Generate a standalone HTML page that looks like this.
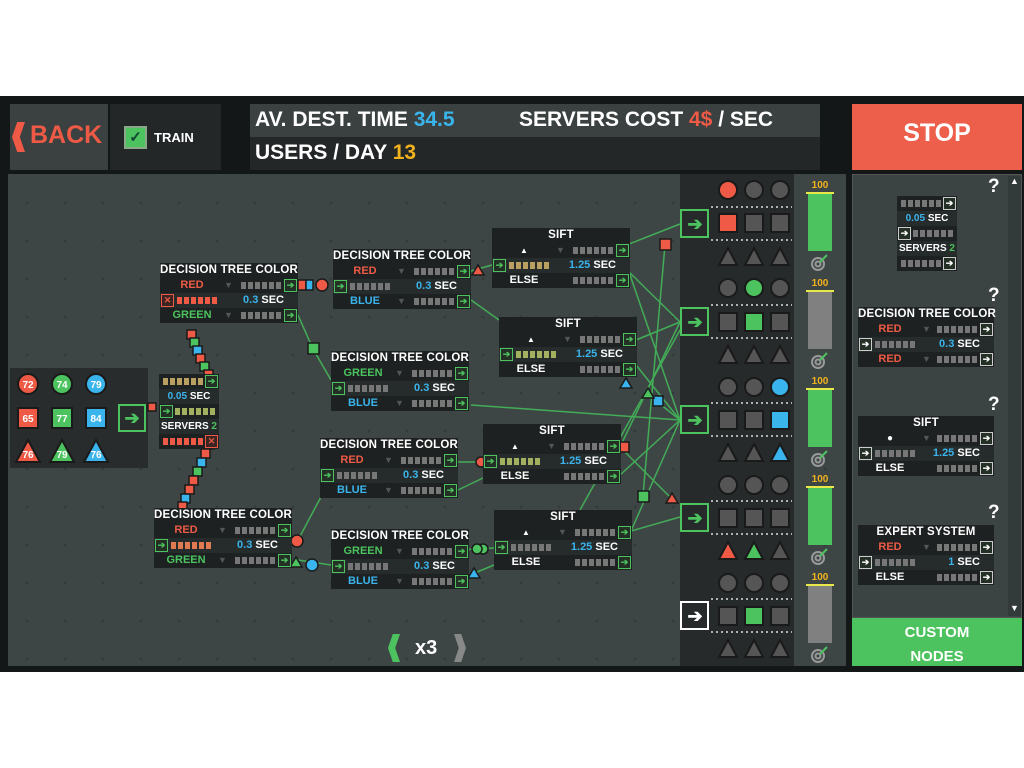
<!DOCTYPE html><html><head><meta charset="utf-8"><style>
*{margin:0;padding:0;box-sizing:border-box}
body{width:1024px;height:768px;background:#fff;position:relative;overflow:hidden;font-family:"Liberation Sans",sans-serif;font-weight:bold}
.abs{position:absolute}
.n{position:absolute;background:#1d2121;color:#fff;font-size:11px}
.n>div{height:15px;position:relative;line-height:15px;white-space:nowrap}
.n .t{text-align:center;font-size:11.5px;letter-spacing:.2px}
.L{position:absolute;left:0;width:64px;text-align:center}
.v{position:absolute;left:64px;color:#555;font-size:9px}
.d{position:absolute;right:17px;top:4px;height:7px;width:40px;background:repeating-linear-gradient(90deg,#777 0 5px,transparent 5px 7px)}
.dl{position:absolute;left:17px;top:4px;height:7px;width:40px;background:repeating-linear-gradient(90deg,#777 0 5px,transparent 5px 7px)}
.a{position:absolute;right:1px;top:1px;width:13px;height:13px;border:1px solid #4cc35e;color:#4cc35e;font-size:9px;line-height:11px;text-align:center;background:#243026}
.al{left:1px;right:auto}
.s{position:absolute;right:14px}
.b{color:#3ab4ec}.r{color:#ee5a45}.g{color:#4cc35e}.y{color:#f2b21d}
.R{background:#262b2b}
</style></head><body>
<div class="abs" style="left:0;top:96px;width:1024px;height:576px;background:#141717"></div>
<!-- top bar -->
<div class="abs" style="left:10px;top:104px;width:98px;height:66px;background:#3a4140"></div>
<div class="abs" style="left:12px;top:122px;width:13px;height:30px;background:#ee5a45;clip-path:polygon(40% 0,100% 0,60% 50%,100% 100%,40% 100%,0 50%)"></div>
<div class="abs" style="left:30px;top:121px;color:#ee5a45;font-size:25px;letter-spacing:0">BACK</div>
<div class="abs" style="left:110px;top:104px;width:111px;height:66px;background:#232727"></div>
<div class="abs" style="left:124px;top:126px;width:23px;height:23px;background:#4cc35e;border:2px solid #8a8;color:#143;font-size:15px;text-align:center;line-height:19px">✓</div>
<div class="abs" style="left:154px;top:130px;color:#fff;font-size:13px">TRAIN</div>
<div class="abs" style="left:250px;top:104px;width:570px;height:33px;background:#3a4140"></div>
<div class="abs" style="left:250px;top:137px;width:570px;height:33px;background:#232727"></div>
<div class="abs" style="left:255px;top:108px;color:#fff;font-size:21px">AV. DEST. TIME <span class="b">34.5</span></div>
<div class="abs" style="left:519px;top:108px;color:#fff;font-size:21px">SERVERS COST <span class="r">4$</span> / SEC</div>
<div class="abs" style="left:255px;top:141px;color:#fff;font-size:21px">USERS / DAY <span class="y">13</span></div>
<div class="abs" style="left:852px;top:104px;width:170px;height:66px;background:#ee5f4b"></div>
<div class="abs" style="left:852px;top:119px;width:170px;text-align:center;color:#fff;font-size:25px">STOP</div>
<!-- canvas -->
<div class="abs" style="left:8px;top:174px;width:838px;height:492px;background:#3d4645;background-image:radial-gradient(#333b3a 1.2px,transparent 1.6px);background-size:38px 38px;background-position:0 10px"></div>
<!-- source -->
<div class="abs" style="left:10px;top:368px;width:138px;height:100px;background:#282c2c"></div>
<div class="abs" style="left:118px;top:404px;width:28px;height:28px;border:2px solid #4cc35e;color:#4cc35e;font-size:18px;text-align:center;line-height:24px">➔</div>
<!-- destination panel -->
<div class="abs" style="left:680px;top:174px;width:114px;height:492px;background:#262a2a"></div>
<!-- right panel -->
<div class="abs" style="left:852px;top:174px;width:170px;height:444px;background:#3c4443;border:1px solid #555"></div>
<div class="abs" style="left:1008px;top:176px;width:13px;height:440px;background:#333b3a"></div>
<div class="abs" style="left:1010px;top:176px;color:#fff;font-size:9px">▲</div>
<div class="abs" style="left:1010px;top:603px;color:#fff;font-size:9px">▼</div>
<div class="abs" style="left:852px;top:618px;width:170px;height:48px;background:#4cc35e"></div>
<div class="abs" style="left:852px;top:621px;width:170px;text-align:center;color:#fff;font-size:15px;line-height:24px">CUSTOM<br>NODES</div>
<div class="abs" style="left:988px;top:176px;color:#fff;font-size:19px">?</div>
<div class="abs" style="left:988px;top:285px;color:#fff;font-size:19px">?</div>
<div class="abs" style="left:988px;top:394px;color:#fff;font-size:19px">?</div>
<div class="abs" style="left:988px;top:502px;color:#fff;font-size:19px">?</div>
<div class="abs" style="left:388px;top:634px;width:12px;height:28px;background:#4cc35e;clip-path:polygon(40% 0,100% 0,60% 50%,100% 100%,40% 100%,0 50%)"></div>
<div class="abs" style="left:415px;top:637px;color:#fff;font-size:20px">x3</div>
<div class="abs" style="left:454px;top:634px;width:12px;height:28px;background:#888;clip-path:polygon(0 0,60% 0,100% 50%,60% 100%,0 100%,40% 50%)"></div>

<svg class="abs" style="left:0;top:0" width="1024" height="768">
<g stroke="#44b85a" stroke-width="1.5" fill="none" opacity=".9">
<path d="M298 315 L313 349 L331 380"/><path d="M471 271 L492 265"/><path d="M471 300 L499 320"/>
<path d="M298 540 L330 480"/><path d="M298 560 L331 565"/>
<path d="M458 462 L483 462"/><path d="M458 490 L483 478"/><path d="M458 550 L494 548"/><path d="M458 580 L494 565"/>
<path d="M629 244 L680 224"/><path d="M629 272 L680 322"/><path d="M629 272 L680 420"/>
<path d="M636 340 L680 322"/><path d="M636 365 L680 420"/><path d="M471 405 L680 420"/>
<path d="M620 447 L680 322"/><path d="M620 447 L673 500"/><path d="M620 475 L680 420"/>
<path d="M631 531 L680 517"/><path d="M631 531 L680 420"/><path d="M580 510 L680 330"/>
<path d="M655 400 L680 420"/><path d="M643 495 L665 245"/>
</g>
<g fill="#555" stroke="#1a1a1a" stroke-width="2">
<circle cx="728" cy="190" r="9" fill="#ee5a45"/><circle cx="754" cy="190" r="9"/><circle cx="780" cy="190" r="9"/>
<circle cx="728" cy="288" r="9"/><circle cx="754" cy="288" r="9" fill="#4cc35e"/><circle cx="780" cy="288" r="9"/>
<circle cx="728" cy="387" r="9"/><circle cx="754" cy="387" r="9"/><circle cx="780" cy="387" r="9" fill="#3ab4ec"/>
<circle cx="728" cy="485" r="9"/><circle cx="754" cy="485" r="9"/><circle cx="780" cy="485" r="9"/>
<circle cx="728" cy="583" r="9"/><circle cx="754" cy="583" r="9"/><circle cx="780" cy="583" r="9"/>
<rect x="719" y="214" width="18" height="18" fill="#ee5a45"/><rect x="745" y="214" width="18" height="18"/><rect x="771" y="214" width="18" height="18"/>
<rect x="719" y="313" width="18" height="18"/><rect x="745" y="313" width="18" height="18" fill="#4cc35e"/><rect x="771" y="313" width="18" height="18"/>
<rect x="719" y="411" width="18" height="18"/><rect x="745" y="411" width="18" height="18"/><rect x="771" y="411" width="18" height="18" fill="#3ab4ec"/>
<rect x="719" y="509" width="18" height="18"/><rect x="745" y="509" width="18" height="18"/><rect x="771" y="509" width="18" height="18"/>
<rect x="719" y="607" width="18" height="18"/><rect x="745" y="607" width="18" height="18" fill="#4cc35e"/><rect x="771" y="607" width="18" height="18"/>
<path d="M719 265 L728 248 L737 265Z M745 265 L754 248 L763 265Z M771 265 L780 248 L789 265Z"/>
<path d="M719 363 L728 346 L737 363Z M745 363 L754 346 L763 363Z M771 363 L780 346 L789 363Z"/>
<path d="M719 461 L728 444 L737 461Z M745 461 L754 444 L763 461Z"/><path d="M771 461 L780 444 L789 461Z" fill="#3ab4ec"/>
<path d="M719 559 L728 542 L737 559Z" fill="#ee5a45"/><path d="M745 559 L754 542 L763 559Z" fill="#4cc35e"/><path d="M771 559 L780 542 L789 559Z"/>
<path d="M719 657 L728 640 L737 657Z M745 657 L754 640 L763 657Z M771 657 L780 640 L789 657Z"/>
</g>
<g stroke="#ddd" stroke-width="1.5" stroke-dasharray="2 3">
<path d="M711 207H792M711 240H792M711 305H792M711 338H792M711 403H792M711 436H792M711 501H792M711 534H792M711 599H792M711 632H792"/>
</g>
<g fill="none" stroke="#4cc35e" stroke-width="2">
<rect x="681" y="210" width="27" height="27"/><rect x="681" y="308" width="27" height="27"/><rect x="681" y="406" width="27" height="27"/><rect x="681" y="504" width="27" height="27"/>
</g>
<rect x="681" y="602" width="27" height="27" fill="none" stroke="#fff" stroke-width="2"/>
<g font-family="Liberation Sans" font-weight="bold" font-size="18" text-anchor="middle" fill="#4cc35e">
<text x="695" y="230">➔</text><text x="695" y="328">➔</text><text x="695" y="426">➔</text><text x="695" y="524">➔</text><text x="695" y="622" fill="#fff">➔</text>
</g>
<g font-family="Liberation Sans" font-weight="bold" font-size="10" fill="#f2b21d" text-anchor="middle">
<text x="820" y="188">100</text><text x="820" y="286">100</text><text x="820" y="384">100</text><text x="820" y="482">100</text><text x="820" y="580">100</text>
</g>
<g>
<rect x="808" y="194" width="24" height="57" fill="#4cc35e"/><rect x="808" y="292" width="24" height="57" fill="#808080"/>
<rect x="808" y="390" width="24" height="57" fill="#4cc35e"/><rect x="808" y="488" width="24" height="57" fill="#4cc35e"/>
<rect x="808" y="586" width="24" height="57" fill="#808080"/>
<path d="M806 193H834M806 291H834M806 389H834M806 487H834M806 585H834" stroke="#e8e84a" stroke-width="2"/>
</g>
<g fill="none" stroke="#999" stroke-width="2">
<circle cx="818" cy="264" r="6"/><circle cx="818" cy="362" r="6"/><circle cx="818" cy="460" r="6"/><circle cx="818" cy="558" r="6"/><circle cx="818" cy="656" r="6"/>
<circle cx="818" cy="264" r="2.5"/><circle cx="818" cy="362" r="2.5"/><circle cx="818" cy="460" r="2.5"/><circle cx="818" cy="558" r="2.5"/><circle cx="818" cy="656" r="2.5"/>
</g>
<g stroke="#4cc35e" stroke-width="2"><path d="M820 262L827 255M820 360L827 353M820 458L827 451M820 556L827 549M820 654L827 647"/></g>
<g stroke="#1a1a1a" stroke-width="2" font-family="Liberation Sans" font-weight="bold" font-size="10" fill="#fff" text-anchor="middle">
<circle cx="28" cy="384" r="10" fill="#ee5a45"/><circle cx="62" cy="384" r="10" fill="#4cc35e"/><circle cx="96" cy="384" r="10" fill="#3ab4ec"/>
<rect x="18" y="408" width="20" height="20" fill="#ee5a45"/><rect x="52" y="408" width="20" height="20" fill="#4cc35e"/><rect x="86" y="408" width="20" height="20" fill="#3ab4ec"/>
<path d="M16 462L28 440L40 462Z" fill="#ee5a45"/><path d="M50 462L62 440L74 462Z" fill="#4cc35e"/><path d="M84 462L96 440L108 462Z" fill="#3ab4ec"/>
<g stroke="none"><text x="28" y="388">72</text><text x="62" y="388">74</text><text x="96" y="388">79</text><text x="28" y="422">65</text><text x="62" y="422">77</text><text x="96" y="422">84</text><text x="28" y="458">76</text><text x="62" y="458">79</text><text x="96" y="458">76</text></g>
</g>
<g stroke="#1a1a1a" stroke-width="1.5">
<rect x="298" y="280" width="8" height="10" fill="#ee5a45"/><rect x="306" y="280" width="7" height="10" fill="#3ab4ec"/><circle cx="322" cy="285" r="6" fill="#ee5a45"/>
<rect x="308" y="343" width="11" height="11" fill="#4cc35e"/><path d="M472 275L478 265L484 275Z" fill="#ee5a45"/>
<circle cx="297" cy="541" r="6" fill="#ee5a45"/><rect x="660" y="239" width="11" height="11" fill="#ee5a45"/>
<rect x="653" y="396" width="10" height="10" fill="#3ab4ec"/><path d="M620 388L626 378L632 388Z" fill="#3ab4ec"/><path d="M642 398L648 388L654 398Z" fill="#4cc35e"/>
<rect x="619" y="442" width="10" height="10" fill="#ee5a45"/><rect x="638" y="491" width="11" height="11" fill="#4cc35e"/><path d="M666 503L672 493L678 503Z" fill="#ee5a45"/>
<circle cx="312" cy="565" r="6" fill="#3ab4ec"/><circle cx="483" cy="549" r="5" fill="#4cc35e"/><circle cx="477" cy="549" r="5" fill="#4cc35e"/><path d="M468 578L474 568L480 578Z" fill="#3ab4ec"/>
<circle cx="481" cy="462" r="5" fill="#ee5a45"/><path d="M290 567L296 557L302 567Z" fill="#4cc35e"/>
<g fill="#ee5a45"><rect x="187" y="330" width="9" height="9"/><rect x="190" y="338" width="9" height="9" fill="#4cc35e"/><rect x="193" y="346" width="9" height="9" fill="#3ab4ec"/><rect x="196" y="354" width="9" height="9"/><rect x="200" y="362" width="9" height="9" fill="#4cc35e"/><rect x="204" y="370" width="9" height="9"/>
<rect x="148" y="403" width="8" height="8"/><rect x="205" y="440" width="9" height="9" fill="#4cc35e"/><rect x="201" y="449" width="9" height="9"/><rect x="197" y="458" width="9" height="9" fill="#3ab4ec"/><rect x="193" y="467" width="9" height="9" fill="#4cc35e"/><rect x="189" y="476" width="9" height="9"/><rect x="185" y="485" width="9" height="9"/><rect x="181" y="494" width="9" height="9" fill="#3ab4ec"/><rect x="178" y="502" width="9" height="9"/></g>
</g>
</svg>

<div class="n" style="left:160px;top:263px;width:138px"><div class="t">DECISION TREE COLOR</div>
<div><span class="L r">RED</span><span class="v">▼</span><span class="d"></span><span class="a">➔</span></div>
<div class="R"><span class="a al r" style="border-color:#ee5a45;color:#ee5a45;background:#3a2522">✕</span><span class="dl" style="background:repeating-linear-gradient(90deg,#ee5a45 0 5px,transparent 5px 7px)"></span><span class="s"><span class="b">0.3</span> SEC</span></div>
<div><span class="L g">GREEN</span><span class="v">▼</span><span class="d"></span><span class="a">➔</span></div></div>

<div class="n" style="left:333px;top:249px;width:138px"><div class="t">DECISION TREE COLOR</div>
<div><span class="L r">RED</span><span class="v">▼</span><span class="d"></span><span class="a">➔</span></div>
<div class="R"><span class="a al">➔</span><span class="dl"></span><span class="s"><span class="b">0.3</span> SEC</span></div>
<div><span class="L b">BLUE</span><span class="v">▼</span><span class="d"></span><span class="a">➔</span></div></div>

<div class="n" style="left:331px;top:351px;width:138px"><div class="t">DECISION TREE COLOR</div>
<div><span class="L g">GREEN</span><span class="v">▼</span><span class="d"></span><span class="a">➔</span></div>
<div class="R"><span class="a al">➔</span><span class="dl"></span><span class="s"><span class="b">0.3</span> SEC</span></div>
<div><span class="L b">BLUE</span><span class="v">▼</span><span class="d"></span><span class="a">➔</span></div></div>

<div class="n" style="left:320px;top:438px;width:138px"><div class="t">DECISION TREE COLOR</div>
<div><span class="L r">RED</span><span class="v">▼</span><span class="d"></span><span class="a">➔</span></div>
<div class="R"><span class="a al">➔</span><span class="dl"></span><span class="s"><span class="b">0.3</span> SEC</span></div>
<div><span class="L b">BLUE</span><span class="v">▼</span><span class="d"></span><span class="a">➔</span></div></div>

<div class="n" style="left:154px;top:508px;width:138px"><div class="t">DECISION TREE COLOR</div>
<div><span class="L r">RED</span><span class="v">▼</span><span class="d"></span><span class="a">➔</span></div>
<div class="R"><span class="a al">➔</span><span class="dl" style="background:repeating-linear-gradient(90deg,#e07a50 0 5px,transparent 5px 7px)"></span><span class="s"><span class="b">0.3</span> SEC</span></div>
<div><span class="L g">GREEN</span><span class="v">▼</span><span class="d"></span><span class="a">➔</span></div></div>

<div class="n" style="left:331px;top:529px;width:138px"><div class="t">DECISION TREE COLOR</div>
<div><span class="L g">GREEN</span><span class="v">▼</span><span class="d"></span><span class="a">➔</span></div>
<div class="R"><span class="a al">➔</span><span class="dl"></span><span class="s"><span class="b">0.3</span> SEC</span></div>
<div><span class="L b">BLUE</span><span class="v">▼</span><span class="d"></span><span class="a">➔</span></div></div>

<div class="n" style="left:492px;top:228px;width:138px"><div class="t">SIFT</div>
<div><span class="L" style="font-size:8px">▲</span><span class="v">▼</span><span class="d"></span><span class="a">➔</span></div>
<div class="R"><span class="a al">➔</span><span class="dl" style="background:repeating-linear-gradient(90deg,#b9a060 0 5px,transparent 5px 7px)"></span><span class="s"><span class="b">1.25</span> SEC</span></div>
<div><span class="L">ELSE</span><span class="d"></span><span class="a">➔</span></div></div>

<div class="n" style="left:499px;top:317px;width:138px"><div class="t">SIFT</div>
<div><span class="L" style="font-size:8px">▲</span><span class="v">▼</span><span class="d"></span><span class="a">➔</span></div>
<div class="R"><span class="a al">➔</span><span class="dl" style="background:repeating-linear-gradient(90deg,#a3b060 0 5px,transparent 5px 7px)"></span><span class="s"><span class="b">1.25</span> SEC</span></div>
<div><span class="L">ELSE</span><span class="d"></span><span class="a">➔</span></div></div>

<div class="n" style="left:483px;top:424px;width:138px"><div class="t">SIFT</div>
<div><span class="L" style="font-size:8px">▲</span><span class="v">▼</span><span class="d"></span><span class="a">➔</span></div>
<div class="R"><span class="a al">➔</span><span class="dl" style="background:repeating-linear-gradient(90deg,#a3b060 0 5px,transparent 5px 7px)"></span><span class="s"><span class="b">1.25</span> SEC</span></div>
<div><span class="L">ELSE</span><span class="d"></span><span class="a">➔</span></div></div>

<div class="n" style="left:494px;top:510px;width:138px"><div class="t">SIFT</div>
<div><span class="L" style="font-size:8px">▲</span><span class="v">▼</span><span class="d"></span><span class="a">➔</span></div>
<div class="R"><span class="a al">➔</span><span class="dl"></span><span class="s"><span class="b">1.25</span> SEC</span></div>
<div><span class="L">ELSE</span><span class="d"></span><span class="a">➔</span></div></div>

<div class="n" style="left:159px;top:374px;width:60px;font-size:10px">
<div><span class="d" style="right:16px;background:repeating-linear-gradient(90deg,#b9a060 0 5px,transparent 5px 7px)"></span><span class="a">➔</span></div>
<div class="R" style="text-align:center"><span class="b">0.05</span> SEC</div>
<div><span class="a al">➔</span><span class="dl" style="left:16px;background:repeating-linear-gradient(90deg,#a3b060 0 5px,transparent 5px 7px)"></span></div>
<div class="R" style="text-align:center">SERVERS <span class="g">2</span></div>
<div><span class="d" style="right:16px;background:repeating-linear-gradient(90deg,#ee5a45 0 5px,transparent 5px 7px)"></span><span class="a" style="border-color:#ee5a45;color:#ee5a45;background:#3a2522">✕</span></div></div>

<div class="n" style="left:897px;top:196px;width:60px;font-size:10px">
<div><span class="d" style="right:16px"></span><span class="a" style="border-color:#ccc;color:#fff">➔</span></div>
<div class="R" style="text-align:center"><span class="b">0.05</span> SEC</div>
<div><span class="a al" style="border-color:#ccc;color:#fff">➔</span><span class="dl" style="left:16px"></span></div>
<div class="R" style="text-align:center">SERVERS <span class="g">2</span></div>
<div><span class="d" style="right:16px"></span><span class="a" style="border-color:#ccc;color:#fff">➔</span></div></div>

<div class="n" style="left:858px;top:307px;width:136px"><div class="t">DECISION TREE COLOR</div>
<div><span class="L r">RED</span><span class="v">▼</span><span class="d"></span><span class="a" style="border-color:#ccc;color:#fff">➔</span></div>
<div class="R"><span class="a al" style="border-color:#ccc;color:#fff">➔</span><span class="dl"></span><span class="s"><span class="b">0.3</span> SEC</span></div>
<div><span class="L r">RED</span><span class="v">▼</span><span class="d"></span><span class="a" style="border-color:#ccc;color:#fff">➔</span></div></div>

<div class="n" style="left:858px;top:416px;width:136px"><div class="t">SIFT</div>
<div><span class="L" style="font-size:10px">●</span><span class="v">▼</span><span class="d"></span><span class="a" style="border-color:#ccc;color:#fff">➔</span></div>
<div class="R"><span class="a al" style="border-color:#ccc;color:#fff">➔</span><span class="dl"></span><span class="s"><span class="b">1.25</span> SEC</span></div>
<div><span class="L">ELSE</span><span class="d"></span><span class="a" style="border-color:#ccc;color:#fff">➔</span></div></div>

<div class="n" style="left:858px;top:525px;width:136px"><div class="t">EXPERT SYSTEM</div>
<div><span class="L r">RED</span><span class="v">▼</span><span class="d"></span><span class="a" style="border-color:#ccc;color:#fff">➔</span></div>
<div class="R"><span class="a al" style="border-color:#ccc;color:#fff">➔</span><span class="dl"></span><span class="s"><span class="b">1</span> SEC</span></div>
<div><span class="L">ELSE</span><span class="d"></span><span class="a" style="border-color:#ccc;color:#fff">➔</span></div></div>
</body></html>
